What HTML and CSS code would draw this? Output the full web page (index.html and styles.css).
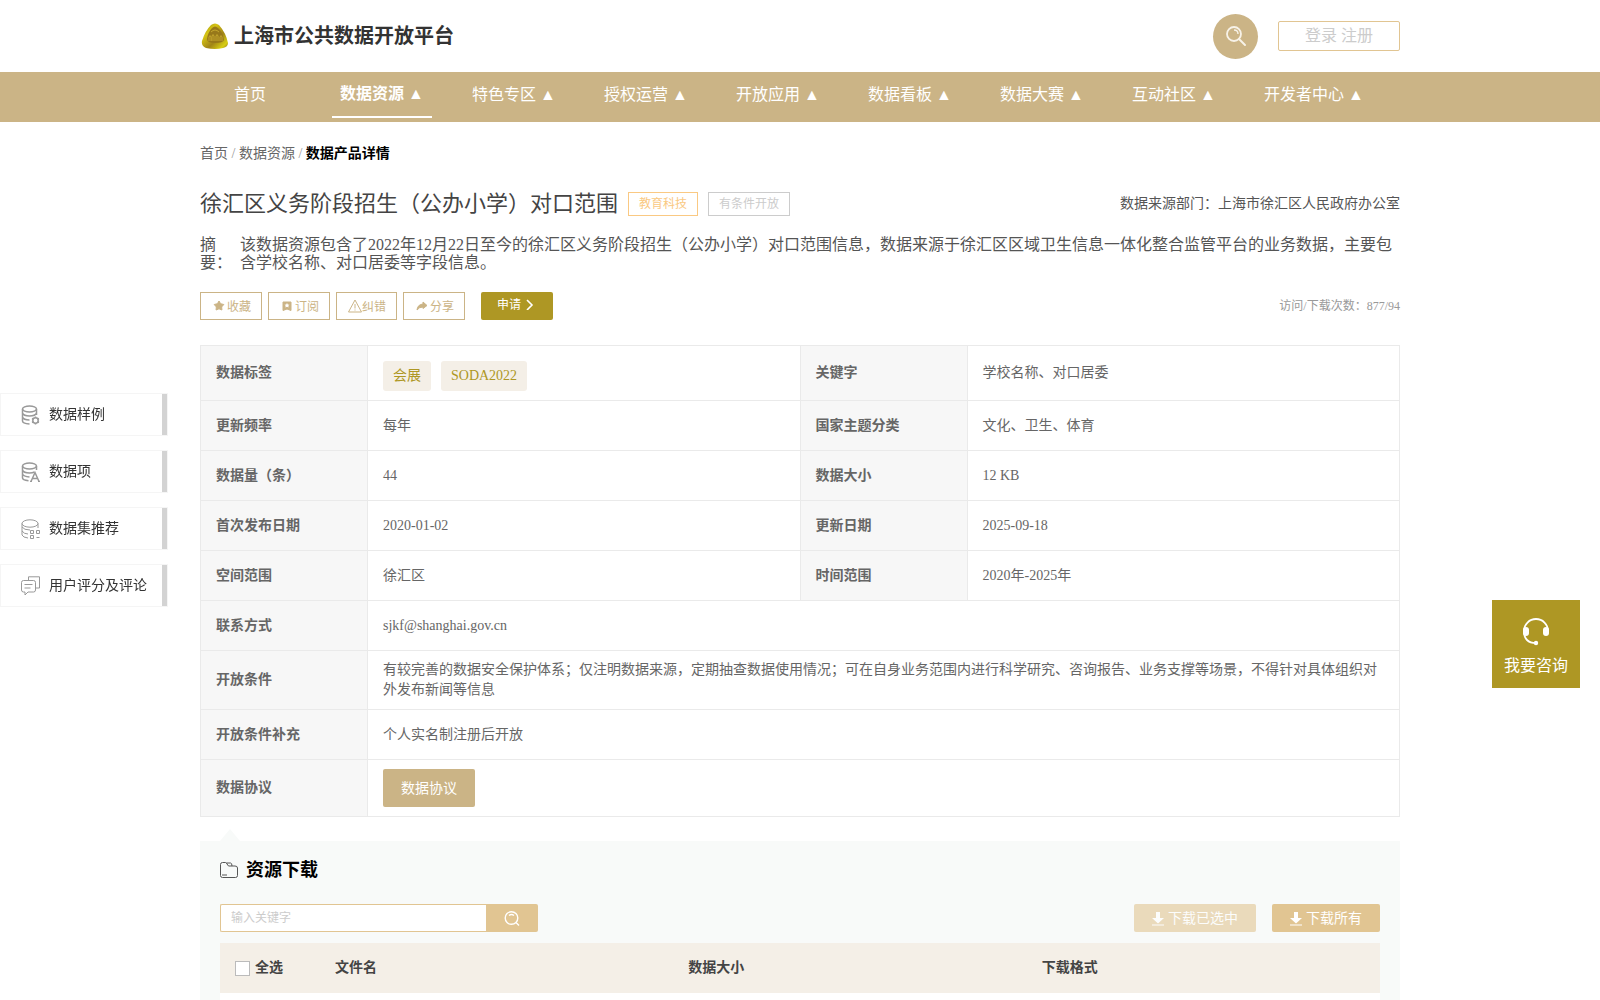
FILE: index.html
```html
<!DOCTYPE html>
<html lang="zh-CN">
<head>
  <meta charset="UTF-8" />
  <title>上海市公共数据开放平台</title>
  <link rel="stylesheet" href="styles.css">
</head>
<body>
  <header class="header container">
    <a class="logo" href="#">
      <svg width="28" height="26" viewBox="0 0 28 26">
        <defs>
          <linearGradient id="gold" x1="0" y1="0" x2="1" y2="1">
            <stop offset="0" stop-color="#8f8a10" />
            <stop offset=".3" stop-color="#d6c414" />
            <stop offset=".6" stop-color="#a08418" />
            <stop offset=".85" stop-color="#d8cf12" />
            <stop offset="1" stop-color="#8a6a28" />
          </linearGradient>
        </defs>
        <path d="M10 2Q14-1 18 2Q25 10 27 20Q27 24 22 25Q14 27 5 25Q0 23 1 18Q4 8 10 2Z" fill="url(#gold)" />
        <path d="M11 5Q14 2 17 5Q22 9 23 17Q22 20 14 20Q6 20 6 16Q7 9 11 5Z" fill="#97781a" />
        <path d="M8 18v-4q1-3 2 0v4m1 0v-5q1-3 2 0v5m2 0v-5q1-3 2 0v5m2 0v-4q1-3 2 0v4M10 9q4-4 8 0" fill="none" stroke="#c5a72e" />
      </svg>
      <span>上海市公共数据开放平台</span>
    </a>
    <div class="header-right">
      <button class="search-circle" aria-label="搜索">
        <svg width="22" height="22" viewBox="0 0 22 22" fill="none" stroke="#f7f2e8" stroke-width="1.8">
          <circle cx="9" cy="9" r="7" />
          <path d="M9 5q4 0 4 4" stroke-width="1.4" />
          <path d="M14 14l6 6" stroke-width="2" stroke-linecap="round" />
        </svg>
      </button>
      <div class="login"><a href="#">登录</a> <a href="#">注册</a></div>
    </div>
  </header>

  <nav class="nav">
    <div class="nav-list container">
      <a href="#">首页</a>
      <a class="active" href="#">数据资源 ▲</a>
      <a href="#">特色专区 ▲</a>
      <a href="#">授权运营 ▲</a>
      <a href="#">开放应用 ▲</a>
      <a href="#">数据看板 ▲</a>
      <a href="#">数据大赛 ▲</a>
      <a href="#">互动社区 ▲</a>
      <a href="#">开发者中心 ▲</a>
    </div>
  </nav>

  <main class="container">
    <div class="breadcrumb"><a href="#">首页</a> <i>/</i> <a href="#">数据资源</a> <i>/</i> <b>数据产品详情</b></div>

    <div class="title-row">
      <h1>徐汇区义务阶段招生（公办小学）对口范围</h1>
      <span class="tag tag-orange">教育科技</span>
      <span class="tag tag-gray">有条件开放</span>
      <span class="source">数据来源部门：上海市徐汇区人民政府办公室</span>
    </div>

    <div class="summary">
      <span class="summary-label">摘 要：</span>
      <p>该数据资源包含了2022年12月22日至今的徐汇区义务阶段招生（公办小学）对口范围信息，数据来源于徐汇区区域卫生信息一体化整合监管平台的业务数据，主要包含学校名称、对口居委等字段信息。</p>
    </div>

    <div class="actions">
      <button class="btn">
        <svg width="14" height="12" viewBox="0 0 14 12"><path d="M6 1l1.600 2.700 3.200.8-2.100 2.400.2 3.100L6 8.800 3.100 10l.2-3.100-2.100-2.400 3.200-.8z" fill="#cbb486" stroke="#cbb486" stroke-linejoin="round" /></svg>收藏
      </button>
      <button class="btn">
        <svg width="14" height="12" viewBox="0 0 14 12"><path d="M2 2h8v8.500L6 9 2 10.500z" fill="#cbb486" stroke="#cbb486" stroke-linejoin="round" /><path d="M6 3l.8 1.500 1.700.2-1.200 1.100.3 1.700L6 6.700l-1.600.8.3-1.700-1.200-1.100 1.700-.2z" fill="#fff" /></svg>订阅
      </button>
      <button class="btn">
        <svg width="13" height="14" viewBox="0 0 13 14" fill="none" stroke="#cbb486" overflow="visible"><path d="M6 1L-.5 13h13z" stroke-linejoin="round" /><path d="M6 5v4.500M6 10.500v1" /></svg>纠错
      </button>
      <button class="btn">
        <svg width="14" height="12" viewBox="0 0 14 12"><path d="M7 2l4 3.500L7 8.500V7Q3 7 1 10Q1.500 4.500 7 4z" fill="#cbb486" stroke="#cbb486" stroke-linejoin="round" /></svg>分享
      </button>
      <button class="btn-apply">
        申请<svg width="8" height="12" viewBox="0 0 8 12" fill="none" stroke="#fff" stroke-width="1.600"><path d="M1 2l5 5-5 5" /></svg>
      </button>
      <span class="visits">访问/下载次数：877/94</span>
    </div>

    <table class="detail">
      <tr>
        <th>数据标签</th>
        <td><span class="label">会展</span><span class="label">SODA2022</span></td>
        <th>关键字</th>
        <td>学校名称、对口居委</td>
      </tr>
      <tr><th>更新频率</th><td>每年</td><th>国家主题分类</th><td>文化、卫生、体育</td></tr>
      <tr><th>数据量（条）</th><td>44</td><th>数据大小</th><td>12 KB</td></tr>
      <tr><th>首次发布日期</th><td>2020-01-02</td><th>更新日期</th><td>2025-09-18</td></tr>
      <tr><th>空间范围</th><td>徐汇区</td><th>时间范围</th><td>2020年-2025年</td></tr>
      <tr><th>联系方式</th><td colspan="3">sjkf@shanghai.gov.cn</td></tr>
      <tr>
        <th>开放条件</th>
        <td colspan="3">有较完善的数据安全保护体系；仅注明数据来源，定期抽查数据使用情况；可在自身业务范围内进行科学研究、咨询报告、业务支撑等场景，不得针对具体组织对外发布新闻等信息</td>
      </tr>
      <tr><th>开放条件补充</th><td colspan="3">个人实名制注册后开放</td></tr>
      <tr><th>数据协议</th><td colspan="3"><button class="btn-protocol">数据协议</button></td></tr>
    </table>

    <section class="download">
      <h2>
        <svg width="18" height="16" viewBox="0 0 18 16" fill="none" stroke="#555">
          <path d="M2.500.5h3Q6.500.5 7 2l1.500 2H15q2.500 0 2.500 2v7.500q0 2-2 2h-13q-2 0-2-2V2.500q0-2 2-2z" />
          <path d="M6.500 1h4q1.500 0 1.500 3M2 13h5" />
        </svg>资源下载
      </h2>
      <div class="toolbar">
        <div class="search-box">
          <input type="text" placeholder="输入关键字" aria-label="关键字">
          <button aria-label="搜索">
            <svg width="16" height="15" viewBox="0 0 16 15" fill="none" stroke="#fff" stroke-width="1.400">
              <circle cx="7.500" cy="7" r="6.300" />
              <path d="M5 4.500q2.500-2 5 0M12 11.500l3 3" />
            </svg>
          </button>
        </div>
        <div class="download-btns">
          <button disabled><svg width="12" height="14" viewBox="0 0 12 14" fill="#fff"><path d="M4 0h4v6h4l-6 5.500L0 6h4zM0 12.500h12v1H0z" /></svg>下载已选中</button>
          <button><svg width="12" height="14" viewBox="0 0 12 14" fill="#fff"><path d="M4 0h4v6h4l-6 5.500L0 6h4zM0 12.500h12v1H0z" /></svg>下载所有</button>
        </div>
      </div>
      <table class="files">
        <thead>
          <tr>
            <th><label><input type="checkbox">全选</label></th>
            <th>文件名</th>
            <th>数据大小</th>
            <th>下载格式</th>
          </tr>
        </thead>
        <tbody>
          <tr><td></td><td></td><td></td><td></td></tr>
        </tbody>
      </table>
    </section>
  </main>

  <aside class="side">
    <a href="#">
      <svg width="20" height="20" viewBox="0 0 20 20" fill="none" stroke="#999" stroke-width="1.500">
        <ellipse cx="8.500" cy="4" rx="7" ry="3" />
        <path d="M1.500 4v12q0 2.500 7 3M15.500 4v6M1.500 8q1 3 7 3t7-3M1.500 12q1 3 7 3" />
        <circle cx="14.500" cy="15.500" r="2.700" />
        <path d="M14.500 11.500v1.300M14.500 18.200v1.300M11 13.500l1.200.7M16.800 16.800l1.200.7M11 17.500l1.200-.7M16.800 14.200l1.200-.7" />
      </svg>数据样例
    </a>
    <a href="#">
      <svg width="20" height="20" viewBox="0 0 20 20" fill="none" stroke="#999" stroke-width="1.500">
        <ellipse cx="8.500" cy="4" rx="7" ry="3" />
        <path d="M1.500 4v12q0 2 6 2.700M15.500 4v4M1.500 8q1 3 7 3 3 0 5-1M1.500 12q1 2.500 7 3" />
        <path d="M10 19.500l4-9 4 9M9 19.500h2M17 19.500h2M11.500 16.500h5" />
      </svg>数据项
    </a>
    <a href="#">
      <svg width="20" height="20" viewBox="0 0 20 20" fill="none" stroke="#999">
        <ellipse cx="9" cy="4.500" rx="8" ry="3.700" />
        <path d="M1 4.500V16q1 2.500 6 3M17 4.500V9M1 8q2 3 8 3M1 12q2 3 6 3M9.500 11.500h3v3h-3zM15.500 11.500h3v3h-3zM9.500 16.500h3v3h-3zM15.500 18.500h3" />
      </svg>数据集推荐
    </a>
    <a href="#">
      <svg width="20" height="20" viewBox="0 0 20 20" fill="none" stroke="#999">
        <path d="M2.500 4.500h10q2 0 2 2v7.500q0 2-2 2H7l-3 3v-3H2.500q-2 0-2-2V6.500q0-2 2-2z" />
        <path d="M7.500 4V.8h11V12H15M3.500 8.500h8M3.500 12h6" />
      </svg>用户评分及评论
    </a>
  </aside>

  <a class="consult" href="#">
    <svg width="26" height="28" viewBox="0 0 26 28">
      <path d="M1 13a12 12 0 0 1 24 0M1 13q0 12 12 12" fill="none" stroke="#fff" stroke-width="1.800" />
      <rect x="0" y="9" width="6" height="9" rx="3" fill="#fff" />
      <rect x="20" y="9" width="6" height="9" rx="3" fill="#fff" />
      <circle cx="13" cy="25" r="2.200" fill="#fff" />
    </svg>
    我要咨询
  </a>
</body>
</html>
```
FILE: styles.css
```css
* {
  box-sizing: border-box;
}

body {
  margin: 0;
  font-family: "Liberation Serif", "Noto Sans CJK SC", serif;
  font-size: 14px;
  line-height: 20px;
  color: #666;
  background-color: #fff;
}

a {
  color: inherit;
  text-decoration: none;
}

button,
input {
  font-family: inherit;
}

button {
  border: none;
  padding: 0;
  cursor: pointer;
}

h1,
h2,
p {
  margin: 0;
}

.container {
  max-width: 1200px;
  margin: 0 auto;
}

/* header */
.header {
  display: flex;
  justify-content: space-between;
  align-items: center;
  height: 72px;
}

.logo {
  display: flex;
  align-items: center;
  gap: 5px;
  padding-left: 1px;
  font-size: 20px;
  font-weight: bold;
  color: #333;
}

.header-right {
  display: flex;
  align-items: center;
  gap: 20px;
}

.search-circle {
  display: flex;
  align-items: center;
  justify-content: center;
  width: 45px;
  height: 45px;
  border-radius: 50%;
  background-color: #cbb486;
}

.login {
  width: 122px;
  border: 1px solid #e1c592;
  border-radius: 2px;
  font-size: 16px;
  line-height: 28px;
  text-align: center;
  color: #ccc;
}

/* navigation */
.nav {
  background-color: #cbb486;
  color: #fff;
}

.nav-list {
  display: flex;
  gap: 32px;
  height: 50px;
}

.nav-list a {
  min-width: 100px;
  height: 46px;
  padding: 0 8px;
  font-size: 16px;
  line-height: 46px;
  text-align: center;
  white-space: nowrap;
}

.nav-list .active {
  font-weight: bold;
  line-height: 44px;
  border-bottom: 2px solid #fff;
}

.breadcrumb {
  padding: 22px 0 20px;
}

.breadcrumb i {
  font-style: normal;
  color: #999;
}

.breadcrumb b {
  color: #000;
}

/* title and summary */
.title-row {
  display: flex;
  align-items: center;
  gap: 10px;
  height: 40px;
}

.title-row h1 {
  font-size: 22px;
  font-weight: normal;
  line-height: 30px;
  color: #444;
}

.tag {
  padding: 0 10px;
  border: 1px solid;
  font-size: 12px;
  line-height: 22px;
}

.tag-orange {
  color: #fac983;
}

.tag-gray {
  color: #ccc;
}

.source {
  margin-left: auto;
  color: #555;
}

.summary {
  display: flex;
  margin-top: 12px;
  font-size: 16px;
  line-height: 18px;
  color: #555;
}

.summary-label {
  flex: 0 0 40px;
}

.actions {
  display: flex;
  gap: 6px;
  margin: 20px 0 25px;
}

.btn,
.btn-apply {
  display: flex;
  align-items: center;
  height: 28px;
  font-size: 12px;
}

.btn {
  padding: 0 10px 0 12px;
  border: 1px solid #cbb486;
  background-color: #fff;
  color: #cbb486;
}

.btn-apply {
  gap: 5px;
  width: 72px;
  margin-left: 10px;
  padding: 0 0 4px 16px;
  border-radius: 2px;
  background-color: #ae9724;
  color: #fff;
}

.visits {
  margin-left: auto;
  font-size: 12px;
  line-height: 28px;
  color: #999;
}

/* detail table */
.detail {
  width: 100%;
  border-collapse: collapse;
  table-layout: fixed;
}

.detail th,
.detail td {
  height: 50px;
  padding: 9px 15px;
  border: 1px solid #eaeaea;
  text-align: left;
}

.detail th {
  width: 167px;
  background-color: #f7f7f7;
}

.label {
  display: inline-block;
  margin: 6px 10px 0 0;
  padding: 0 10px;
  border-radius: 3px;
  background-color: #f4efe7;
  line-height: 30px;
  vertical-align: top;
  color: #ae9724;
}

.btn-protocol {
  display: block;
  width: 92px;
  height: 38px;
  padding-bottom: 3px;
  border-radius: 2px;
  background-color: #cbb486;
  font-size: 14px;
  color: #fff;
}

/* download */
.download {
  position: relative;
  margin-top: 24px;
  padding: 15px 20px 30px;
  background-color: #f8faf9;
}

.download::before {
  content: "";
  position: absolute;
  top: -12px;
  left: 20px;
  border: 10px solid transparent;
  border-top: none;
  border-bottom: 12px solid #f8faf9;
}

.download h2 {
  display: flex;
  align-items: center;
  gap: 8px;
  font-size: 18px;
  line-height: 28px;
  color: #000;
}

.toolbar {
  display: flex;
  justify-content: space-between;
  margin: 20px 0 11px;
}

.search-box {
  display: flex;
  height: 28px;
}

.search-box input {
  width: 266px;
  padding: 0 10px;
  border: 1px solid #e1c592;
  border-right: none;
  border-radius: 2px 0 0 2px;
  font-size: 12px;
}

.search-box input::placeholder {
  color: #ccc;
}

.search-box button {
  display: flex;
  align-items: center;
  justify-content: center;
  width: 52px;
  border-radius: 0 2px 2px 0;
  background-color: #e1c592;
}

.download-btns {
  display: flex;
  gap: 16px;
}

.download-btns button {
  display: flex;
  align-items: center;
  gap: 4px;
  height: 28px;
  padding: 0 18px 3px;
  border-radius: 2px;
  background-color: #e1c592;
  font-size: 14px;
  color: #fff;
}

.download-btns svg {
  margin-top: 4px;
}

.download-btns button:disabled {
  opacity: .6;
}

.files {
  width: 100%;
  border-collapse: collapse;
  table-layout: fixed;
  background-color: #fff;
}

.files th,
.files td {
  height: 50px;
  padding: 0 15px;
  text-align: left;
}

.files th {
  background-color: #f4efe7;
  color: #444;
}

.files th:first-child {
  width: 100px;
}

.files label {
  display: flex;
  align-items: center;
  gap: 5px;
}

.files input {
  appearance: none;
  width: 15px;
  height: 15px;
  margin: 0;
  border: 1px solid #bbb;
  background-color: #fff;
}

/* floating side menu */
.side {
  position: fixed;
  top: 393px;
  left: 0;
  display: flex;
  flex-direction: column;
  gap: 14px;
}

.side a {
  display: flex;
  align-items: center;
  gap: 8px;
  width: 168px;
  height: 43px;
  padding-left: 20px;
  border: 1px solid #f5f5f5;
  background: linear-gradient(to left, #d3d3d3 5px, #fff 5px);
  color: #333;
}

.consult {
  position: fixed;
  top: 600px;
  right: 20px;
  display: flex;
  flex-direction: column;
  align-items: center;
  gap: 10px;
  width: 88px;
  height: 88px;
  padding-top: 18px;
  background-color: #ae9724;
  font-size: 16px;
  color: #fff;
}
```
